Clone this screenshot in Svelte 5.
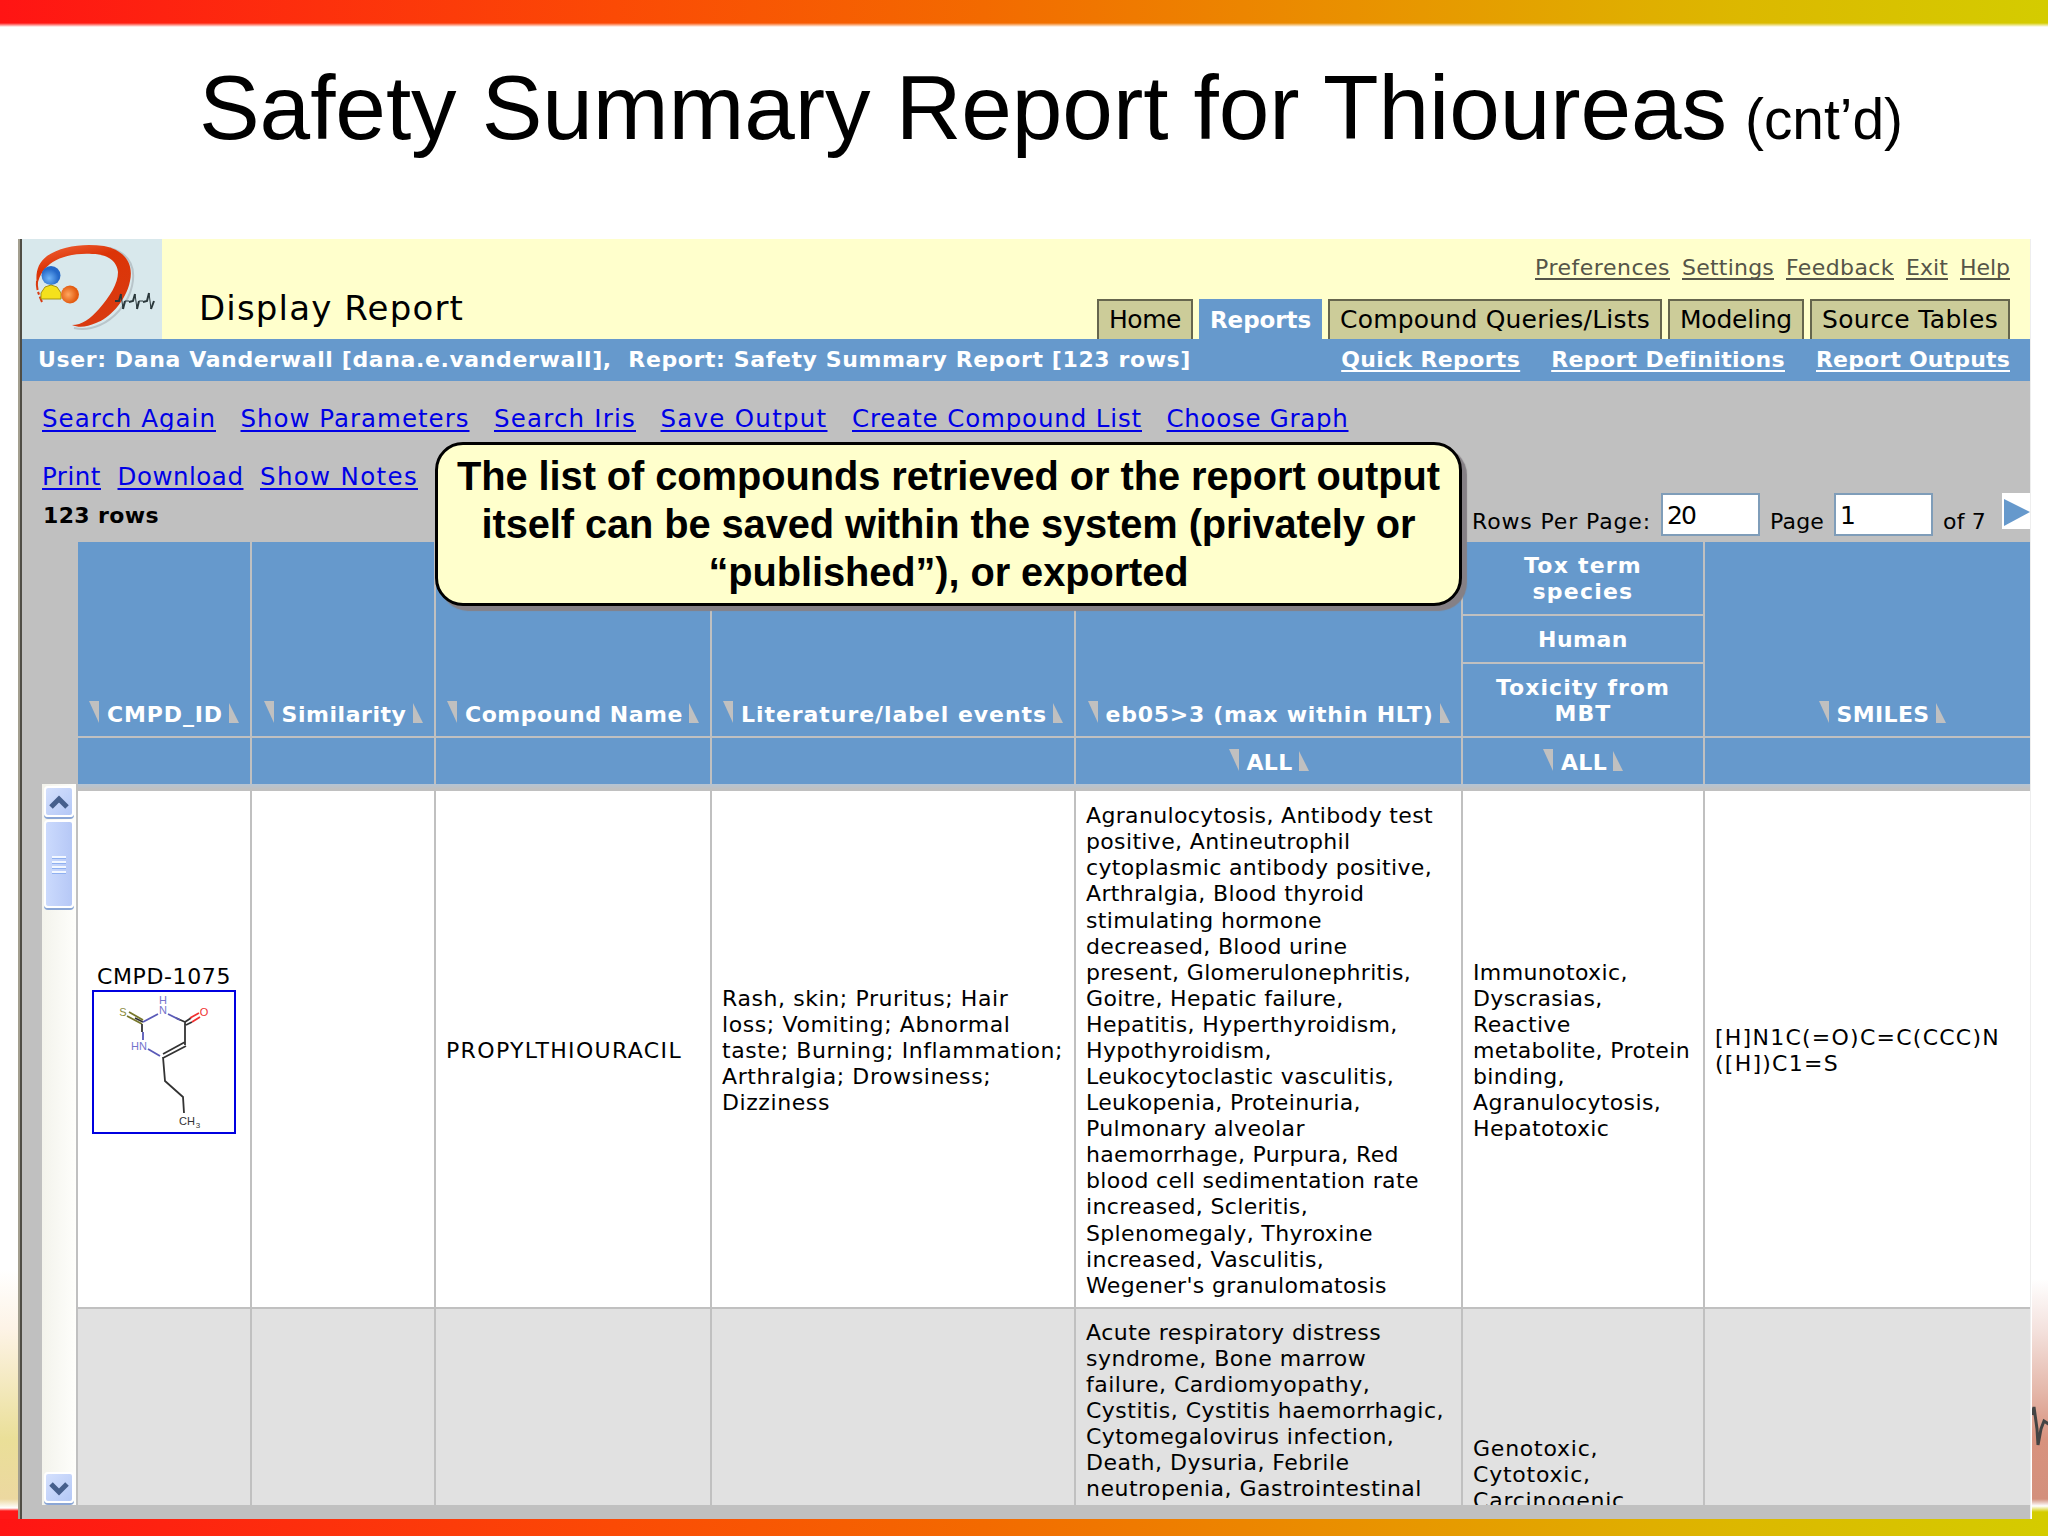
<script lang="ts">
  const accountLinks = [
    { label: "Preferences", w: 135 },
    { label: "Settings", w: 92 },
    { label: "Feedback", w: 108 },
    { label: "Exit", w: 42 },
    { label: "Help", w: 50 },
  ];

  const tabs = [
    { label: "Home", w: 72 },
    { label: "Reports", w: 101, active: true },
    { label: "Compound Queries/Lists", w: 310 },
    { label: "Modeling", w: 112 },
    { label: "Source Tables", w: 176 },
  ];

  const reportLinks = [
    { label: "Quick Reports", w: 179 },
    { label: "Report Definitions", w: 233 },
    { label: "Report Outputs", w: 194 },
  ];

  const actions = [
    { label: "Search Again", w: 174 },
    { label: "Show Parameters", w: 229 },
    { label: "Search Iris", w: 142 },
    { label: "Save Output", w: 167 },
    { label: "Create Compound List", w: 290 },
    { label: "Choose Graph", w: 182 },
  ];

  const exportActions = [
    { label: "Print", w: 59 },
    { label: "Download", w: 126 },
    { label: "Show Notes", w: 158 },
  ];

  const columns = [
    { label: "CMPD_ID", w: 116 },
    { label: "Similarity", w: 125 },
    { label: "Compound Name", w: 218 },
    { label: "Literature/label events", w: 306 },
    { label: "eb05>3 (max within HLT)", w: 328, filter: true },
    { label: "Toxicity", stacked: true, filter: true },
    { label: "SMILES", w: 93 },
  ];

  const events = `Rash, skin; Pruritus; Hair
loss; Vomiting; Abnormal
taste; Burning; Inflammation;
Arthralgia; Drowsiness;
Dizziness`;

  const eb05 = `Agranulocytosis, Antibody test
positive, Antineutrophil
cytoplasmic antibody positive,
Arthralgia, Blood thyroid
stimulating hormone
decreased, Blood urine
present, Glomerulonephritis,
Goitre, Hepatic failure,
Hepatitis, Hyperthyroidism,
Hypothyroidism,
Leukocytoclastic vasculitis,
Leukopenia, Proteinuria,
Pulmonary alveolar
haemorrhage, Purpura, Red
blood cell sedimentation rate
increased, Scleritis,
Splenomegaly, Thyroxine
increased, Vasculitis,
Wegener's granulomatosis`;

  const toxicity = `Immunotoxic,
Dyscrasias,
Reactive
metabolite, Protein
binding,
Agranulocytosis,
Hepatotoxic`;

  const eb05Next = `Acute respiratory distress
syndrome, Bone marrow
failure, Cardiomyopathy,
Cystitis, Cystitis haemorrhagic,
Cytomegalovirus infection,
Death, Dysuria, Febrile
neutropenia, Gastrointestinal`;

  const toxicityNext = `Genotoxic,
Cytotoxic,
Carcinogenic`;

  function fit(node: HTMLElement, width: number) {
    const chars = Math.max(...node.innerText.trim().split("\n").map((l) => l.length));
    node.style.letterSpacing = "0px";
    const natural = node.getBoundingClientRect().width;
    node.style.letterSpacing = `${(width - natural) / chars}px`;
  }
</script>

{#snippet sortable(label: string, w: number)}
  <span class="sortable">
    <svg class="sort" width="10" height="22"><path d="M0 0H10V22Z" /></svg>
    <b class="t" use:fit={w}>{label}</b>
    <svg class="sort up" width="10" height="20"><path d="M0 0V20H10Z" /></svg>
  </span>
{/snippet}

<div class="slide">
  <div class="band top"></div>
  <h1><span class="t" use:fit={1528}>Safety Summary Report for Thioureas</span><small class="t" use:fit={158}>(cnt’d)</small></h1>

  <div class="stage">
    <div class="edge left"></div>
    <div class="window">
      <header>
        <svg class="logo" viewBox="0 0 140 100" width="140" height="100">
          <defs>
            <linearGradient id="swoosh" x1="0" y1="0" x2="0.3" y2="1">
              <stop offset="0" stop-color="#f2683c" />
              <stop offset="0.3" stop-color="#dc3407" />
              <stop offset="1" stop-color="#d93a10" />
            </linearGradient>
            <radialGradient id="blue" cx="0.4" cy="0.65"><stop offset="0" stop-color="#6fb4f8" /><stop offset="1" stop-color="#2468c8" /></radialGradient>
            <radialGradient id="orange" cx="0.4" cy="0.5"><stop offset="0" stop-color="#ffa860" /><stop offset="1" stop-color="#e25a10" /></radialGradient>
          </defs>
          <rect width="140" height="100" fill="#d8e8ec" />
          <path d="M86 8C106 14 112 28 108 46C104 65 88 80 76 85C67 89 58 90 50 88" fill="none" stroke="#b9c5ca" stroke-width="2" transform="translate(2 1)" />
          <path d="M15 47C13 33 16 24 25 17C39 7 62 4 82 7C102 11 112 24 108 42C104 63 86 80 74 84C65 88 57 89 50 86C60 86 68 80 77 70C88 57 96 45 96 33C95 21 84 15 70 15C52 14 37 18 28 25C19 32 17 39 15 47Z" fill="url(#swoosh)" />
          <path d="M15 42C14 49 17 56 20 63" fill="none" stroke="#d93a10" stroke-width="2" stroke-dasharray="9 2 3 2" />
          <circle cx="29" cy="36.500" r="9.500" fill="url(#blue)" />
          <path d="M19 60V54L23 48L29 46L35 48L39 54V60Z" fill="#f4e11c" stroke="#a79412" stroke-width="1" />
          <circle cx="48" cy="55.500" r="9" fill="url(#orange)" />
          <path d="M93 62L97 62L99 55M101 70L103 62M107 63L111 62L113 55M115 70L117 62M121 63L125 62L127 54M129 70L132 62" fill="none" stroke="#29373a" stroke-width="2" />
          <path d="M99 55L101 70M113 55L115 70M127 54L129 70M103 62H107M117 62H121" fill="none" stroke="#29373a" stroke-width="1" />
        </svg>
        <div class="page-title"><span class="t" use:fit={265}>Display Report</span></div>
        <div class="nav">
          <div class="account">
            {#each accountLinks as link}
              <a href="#top" class="t" use:fit={link.w}>{link.label}</a>
            {/each}
          </div>
          <div class="tabs">
            {#each tabs as tab}
              <div class="tab" class:active={tab.active}><span class="t" use:fit={tab.w}>{tab.label}</span></div>
            {/each}
          </div>
        </div>
      </header>

      <div class="status">
        <span class="t" use:fit={1153}>User: Dana Vanderwall [dana.e.vanderwall],&nbsp; Report: Safety Summary Report [123 rows]</span>
        <div class="report-links">
          {#each reportLinks as link}
            <a href="#top" class="t" use:fit={link.w}>{link.label}</a>
          {/each}
        </div>
      </div>

      <div class="actions">
        {#each actions as link}
          <a href="#top" class="t" use:fit={link.w}>{link.label}</a>
        {/each}
      </div>
      <div class="actions second">
        {#each exportActions as link}
          <a href="#top" class="t" use:fit={link.w}>{link.label}</a>
        {/each}
      </div>

      <div class="pager">
        <b class="t count" use:fit={116}>123 rows</b>
        <span class="t" use:fit={179}>Rows Per Page:</span>
        <div class="field rows"><span class="t" use:fit={28}>20</span></div>
        <span class="t" use:fit={54}>Page</span>
        <div class="field">1</div>
        <span class="t" use:fit={43}>of 7</span>
        <div class="next"><svg width="28" height="36"><path d="M2 6L28 19L2 33Z" fill="#6699cc" /></svg></div>
      </div>

      <div class="grid head">
        {#each columns as col}
          <div class="col">
            {#if col.stacked}
              <div class="stack first"><b class="t" use:fit={118}>Tox term<br />species</b></div>
              <div class="stack second"><b class="t" use:fit={90}>Human</b></div>
              <div class="stack third"><b class="t" use:fit={174}>Toxicity from<br />MBT</b></div>
            {:else}
              <div class="name">{@render sortable(col.label, col.w)}</div>
            {/if}
            <div class="filter">{#if col.filter}{@render sortable("ALL", 46)}{/if}</div>
          </div>
        {/each}
      </div>

      <div class="body">
        <div class="scroll">
          <div class="btn"><svg width="26" height="26"><path d="M5 18L13 10L21 18" /></svg></div>
          <div class="thumb"><i></i><i></i><i></i><i></i></div>
          <div class="btn down"><svg width="26" height="26"><path d="M5 9L13 17L21 9" /></svg></div>
        </div>
        <div class="rows-wrap">
          <div class="grid row">
            <div class="cell cmpd">
              <span class="t" use:fit={134}>CMPD-1075</span>
              <svg class="mol" viewBox="0 0 144 144" width="144" height="144">
                <rect x="1" y="1" width="142" height="142" fill="#fff" stroke="#0000e0" stroke-width="2" />
                <g fill="none" stroke-width="1.800">
                  <path d="M37 22L51 30M35 26L50 34" stroke="#77772a" />
                  <path d="M51 32L43 28M50 34V42M93 32L84 28M93 32V55M93 52L71 64M94 56L71 68M93 32L99 28M94 35L100 32M71 67L73 91L91 107L92 123" stroke="#333" />
                  <path d="M51 32L66 24M76 24L88 30M51 42V50M56 59L68 66" stroke="#5a5ab8" />
                  <path d="M98 28L107 23M100 32L108 27" stroke="#f03030" />
                </g>
                <g font-size="11" text-anchor="middle">
                  <text x="31" y="26" fill="#8a8a3a">S</text>
                  <text x="71" y="14" fill="#7474cc">H</text>
                  <text x="71" y="24" fill="#7474cc">N</text>
                  <text x="112" y="26" fill="#f03030">O</text>
                  <text x="47" y="60" fill="#7474cc">HN</text>
                  <text x="95" y="135" fill="#333">CH</text>
                  <text x="106" y="138" font-size="8" fill="#333">3</text>
                </g>
              </svg>
            </div>
            <div class="cell"></div>
            <div class="cell"><span class="t" use:fit={236}>PROPYLTHIOURACIL</span></div>
            <div class="cell"><span class="t" use:fit={341}>{events}</span></div>
            <div class="cell"><span class="t" use:fit={347}>{eb05}</span></div>
            <div class="cell"><span class="t" use:fit={217}>{toxicity}</span></div>
            <div class="cell"><span class="t" use:fit={285}>{"[H]N1C(=O)C=C(CCC)N\n([H])C1=S"}</span></div>
          </div>
          <div class="grid row alt">
            <div class="cell"></div>
            <div class="cell"></div>
            <div class="cell"></div>
            <div class="cell"></div>
            <div class="cell"><span class="t" use:fit={358}>{eb05Next}</span></div>
            <div class="cell tox"><span class="t" use:fit={152}>{toxicityNext}</span></div>
            <div class="cell"></div>
          </div>
        </div>
      </div>
    </div>
    <div class="edge right">
      <svg width="18" height="60"><path d="M0 16L2 8L5 30L6 46L9 30L12 22L18 26" fill="none" stroke="#444" stroke-width="3" /></svg>
    </div>
  </div>
  <div class="band bottom"></div>

  <div class="callout">
    <span class="t" use:fit={983}>The list of compounds retrieved or the report output</span>
    <span class="t" use:fit={934}>itself can be saved within the system (privately or</span>
    <span class="t" use:fit={480}>“published”), or exported</span>
  </div>
</div>

<style>
  :global(body) {
    background: #fff;
    overflow: hidden;
  }

  .slide {
    position: relative;
    display: flex;
    flex-direction: column;
    width: 2048px;
    height: 1536px;
    overflow: hidden;
    background: #fff;
    font-family: "DejaVu Sans", Verdana, sans-serif;
    font-size: 22px;
    line-height: 26px;
    color: #000;
  }

  .t {
    display: inline-block;
    flex-shrink: 0;
    white-space: pre;
  }

  .band {
    flex-shrink: 0;
    background: linear-gradient(90deg, #ff1414, #fb4a05 30%, #f36a00 48%, #e89500 68%, #dcb800 85%, #d4cc00);
  }

  .band.top {
    height: 27px;
    mask-image: linear-gradient(#000 85%, transparent);
  }

  .band.bottom {
    height: 17px;
  }

  h1 {
    display: flex;
    align-items: baseline;
    flex-shrink: 0;
    gap: 18px;
    height: 212px;
    margin: 0;
    padding-left: 199px;
    box-sizing: border-box;
    font: 91px/162px "Liberation Sans", Arial, sans-serif;
  }

  h1 small {
    font-size: 56.900px;
  }

  .stage {
    display: flex;
    height: 1280px;
  }

  .edge {
    display: flex;
    flex-shrink: 0;
    align-items: flex-end;
    width: 18px;
  }

  .edge.left {
    background: linear-gradient(#fff0 1030px, #fdf3e6 1090px, #eadf98 1200px, #ecd8a0 1260px, #fff 1269px, #ff1818 1272px);
  }

  .edge.right {
    background: linear-gradient(#fff0 1040px, #f4e2de 1090px, #e5b9ac 1150px, #d8927e 1200px, #d3907c 1260px, #fff 1267px, #d4cc00 1273px);
  }

  .edge svg {
    margin-bottom: 60px;
  }

  .window {
    display: flex;
    flex-direction: column;
    flex-shrink: 0;
    width: 2008px;
    border-left: 4px ridge #a39f8f;
    border-right: 1px solid #eee;
    margin-right: 1px;
    background: #c0c0c0;
    overflow: hidden;
  }

  header {
    display: flex;
    height: 100px;
    flex-shrink: 0;
    background: #ffffcc;
  }

  .page-title {
    padding: 48px 0 0 37px;
    font-size: 34px;
    line-height: 42px;
  }

  .nav {
    display: flex;
    flex-direction: column;
    align-items: flex-end;
    justify-content: space-between;
    margin-left: auto;
    padding-right: 20px;
  }

  .account {
    display: flex;
    gap: 12px;
    padding-top: 16px;
  }

  a {
    color: #0000e6;
    text-decoration: underline;
    text-decoration-thickness: 2px;
    text-underline-offset: 3px;
    text-decoration-skip-ink: none;
  }

  .account a {
    color: #555548;
  }

  .tabs {
    display: flex;
    gap: 6px;
  }

  .tab {
    height: 40px;
    padding: 5px 10px 0;
    box-sizing: border-box;
    border: 2px solid #66664d;
    border-bottom: none;
    background: #cccc99;
    font-size: 25px;
    line-height: 28px;
  }

  .tab.active {
    padding: 5px 9px 0;
    border-color: #6699cc;
    background: #6699cc;
    color: #fff;
    font-size: 23px;
    font-weight: bold;
  }

  .status {
    display: flex;
    justify-content: space-between;
    flex-shrink: 0;
    height: 42px;
    padding: 8px 20px 0 16px;
    box-sizing: border-box;
    background: #6699cc;
    color: #fff;
    font-weight: bold;
  }

  .report-links {
    display: flex;
    gap: 31px;
  }

  .report-links a {
    color: #fff;
  }

  .actions {
    display: flex;
    gap: 24.500px;
    flex-shrink: 0;
    height: 58px;
    padding: 24px 0 0 20px;
    box-sizing: border-box;
    font-size: 24.500px;
    line-height: 28px;
  }

  .actions.second {
    gap: 16.500px;
    height: 54px;
  }

  .pager {
    display: flex;
    align-items: flex-start;
    flex-shrink: 0;
    height: 49px;
    padding-left: 21px;
    line-height: 76px;
  }

  .pager > .t {
    margin-top: -9px;
    margin-right: 10px;
  }

  .pager .count {
    margin-top: -15px;
    margin-right: auto;
  }

  .field {
    width: 99px;
    height: 43px;
    margin-right: 10px;
    padding: 0 4px;
    box-sizing: border-box;
    border: 2px solid #7f9db9;
    background: #fff;
    font-size: 25px;
    line-height: 42px;
  }

  .next {
    width: 28px;
    height: 36px;
    margin-left: 6px;
    background: #fff;
    line-height: 0;
  }

  .grid {
    display: grid;
    grid-template-columns: 174px 184px 276px 364px 387px 242px 325px;
  }

  .head {
    flex-shrink: 0;
    height: 242px;
    margin-left: 56px;
    color: #fff;
  }

  .col {
    display: flex;
    flex-direction: column;
    border-right: 2px solid #c0c0c0;
    background: #6699cc;
    text-align: center;
  }

  .col:last-child {
    border-right: none;
  }

  .col:last-child .name {
    padding-left: 29px;
  }

  .name,
  .filter {
    display: flex;
    justify-content: center;
    align-items: flex-end;
  }

  .name {
    height: 194px;
    padding-bottom: 8px;
    box-sizing: border-box;
  }

  .filter {
    height: 46px;
    padding-bottom: 8px;
    box-sizing: border-box;
    border-top: 2px solid #c0c0c0;
    flex: 1;
  }

  .stack {
    box-sizing: border-box;
    border-bottom: 2px solid #c0c0c0;
  }

  .stack.first {
    height: 74px;
    padding-top: 11px;
  }

  .stack.second {
    height: 48px;
    padding-top: 11px;
  }

  .stack.third {
    height: 72px;
    padding-top: 11px;
    border-bottom: none;
  }

  .sortable {
    display: flex;
    align-items: flex-end;
    gap: 8px;
  }

  .sort {
    fill: #c0c0c0;
    margin-bottom: 5px;
  }

  .sort.up {
    margin-left: -2px;
  }

  .body {
    display: flex;
    height: 721px;
    flex-shrink: 0;
    padding-left: 20px;
  }

  .scroll {
    display: flex;
    flex-direction: column;
    width: 34px;
    padding: 2px 2px 0;
    box-sizing: border-box;
    background: linear-gradient(90deg, #f3f3ec, #fefefb);
  }

  .rows-wrap {
    display: flex;
    flex-direction: column;
    margin-left: 2px;
    padding-top: 7px;
    background: linear-gradient(#b4c4d4, #c0c0c0 5px);
    overflow: hidden;
  }

  .btn,
  .thumb {
    display: flex;
    align-items: center;
    justify-content: center;
    flex-shrink: 0;
    border: 2px solid #fff;
    border-radius: 4px;
    background: linear-gradient(135deg, #d4e0fd, #b4c8f6);
    box-shadow: 0 2px 0 #8aa6d6;
    box-sizing: border-box;
  }

  .btn {
    height: 31px;
    fill: none;
    stroke: #465f8c;
    stroke-width: 5;
  }

  .thumb {
    flex-direction: column;
    gap: 3px;
    height: 88px;
    margin-top: 3px;
    background: linear-gradient(90deg, #cbdafd, #b6c8f6);
  }

  .thumb i {
    width: 14px;
    height: 2px;
    background: #f2f7ff;
    box-shadow: 0 1px 0 #8fb0f0;
  }

  .btn.down {
    margin-top: auto;
    margin-bottom: 2px;
  }

  .row {
    height: 516px;
    flex-shrink: 0;
    background: #fff;
  }

  .row.alt {
    height: 198px;
    border-top: 2px solid #c0c0c0;
    box-sizing: border-box;
    background: #e1e1e1;
    overflow: hidden;
  }

  .cell {
    display: flex;
    align-items: center;
    padding: 4px 0 0 10px;
    box-sizing: border-box;
    border-right: 2px solid #c0c0c0;
    line-height: 26.080px;
    overflow: hidden;
  }

  .alt .cell {
    align-items: flex-start;
    padding-top: 11px;
  }

  .alt .tox {
    padding-top: 127px;
  }

  .row .cell:last-child {
    border-right: none;
  }

  .row .cmpd {
    flex-direction: column;
    justify-content: center;
    padding: 0;
  }

  .mol {
    font-family: "Liberation Sans", Arial, sans-serif;
  }

  .callout {
    position: absolute;
    left: 435px;
    top: 442px;
    display: flex;
    flex-direction: column;
    align-items: center;
    width: 1027px;
    height: 164px;
    padding-top: 7px;
    box-sizing: border-box;
    border: 3px solid #000;
    border-radius: 28px;
    background: #ffffcc;
    box-shadow: 5px 5px 1px #858085;
    font: bold 39.800px/48px "Liberation Sans", Arial, sans-serif;
  }
</style>
